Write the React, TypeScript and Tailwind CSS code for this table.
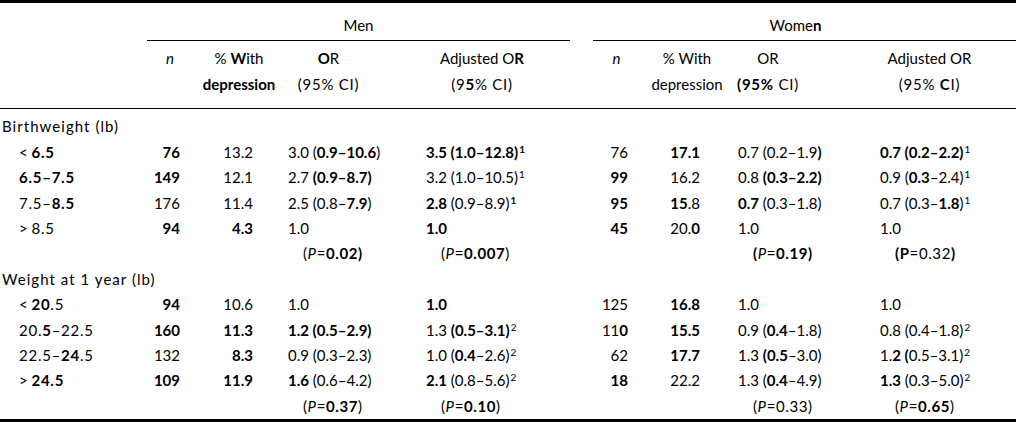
import type { ReactNode } from 'react';

const B = ({ children }: { children: ReactNode }) => <span className="font-bold">{children}</span>;
const P = () => <span className="italic">P</span>;
const Sup = ({ children }: { children: ReactNode }) => <sup className="text-[10px] ml-[1px]">{children}</sup>;
const Lt = () => <span className="mr-[3px]">&lt;</span>;
const Gt = () => <span className="mr-[3px]">&gt;</span>;
// p-value cells sit a little in from the column edge
const Pv = ({ children }: { children: ReactNode }) => <span className="ml-[15px] tracking-[0.04em]">{children}</span>;

const cols = 'grid grid-cols-[147px_43px_75px_145px_160px_23px_47px_72px_153px_151px]';

type Row = {
  label: ReactNode;
  section?: boolean;
  cells?: ReactNode[];
};

const rows: Row[] = [
  { label: 'Birthweight (lb)', section: true },
  {
    label: <><Lt /><B>6.5</B></>,
    cells: [
      <B>76</B>, '13.2', <>3.0 (<B>0.9–10.6</B>)</>, <B>3.5 (1.0–12.8)<Sup>1</Sup></B>,
      '76', <B>17.1</B>, <>0.7 (0.2–1.9<B>)</B></>, <><B>0.7 (0.2–2.2)</B><Sup>1</Sup></>,
    ],
  },
  {
    label: <B>6.5–7.5</B>,
    cells: [
      <B>149</B>, '12.1', <>2.7 <B>(0.9–8.7)</B></>, <>3.2 (1.0–10.5)<Sup>1</Sup></>,
      <B>99</B>, '16.2', <>0.8 <B>(0.3–2.2)</B></>, <>0.9 (<B>0.3</B>–2.4)<Sup>1</Sup></>,
    ],
  },
  {
    label: <>7.5–<B>8.5</B></>,
    cells: [
      '176', '11.4', <>2.5 (0.8–<B>7.9</B>)</>, <><B>2.8</B> (0.9–8.9)<B><Sup>1</Sup></B></>,
      <B>95</B>, <><B>15</B>.8</>, <><B>0.7</B> (0.3–1.8)</>, <>0.7 (0.3–<B>1.8</B>)<Sup>1</Sup></>,
    ],
  },
  {
    label: <><Gt />8.5</>,
    cells: [
      <B>94</B>, <B>4.3</B>, '1.0', <B>1.0</B>,
      <B>45</B>, <>20.<B>0</B></>, '1.0', '1.0',
    ],
  },
  {
    label: '',
    cells: [
      '', '', <Pv>(<P />=<B>0.02)</B></Pv>, <Pv>(<P />=<B>0.007</B>)</Pv>,
      '', '', <Pv><B>(</B><P />=<B>0.19)</B></Pv>, <Pv><B>(P</B>=0.32<B>)</B></Pv>,
    ],
  },
  { label: 'Weight at 1 year (lb)', section: true },
  {
    label: <><Lt /><B>20</B>.5</>,
    cells: [
      <B>94</B>, '10.6', '1.0', <B>1.0</B>,
      '125', <B>16.8</B>, '1.0', '1.0',
    ],
  },
  {
    label: <>20.<B>5</B>–22.5</>,
    cells: [
      <B>160</B>, <B>11.3</B>, <B>1.2 (0.5–2.9)</B>, <>1.3 <B>(0.5–3.1)</B><Sup>2</Sup></>,
      <>11<B>0</B></>, <B>15.5</B>, <>0.9 (<B>0.4</B>–1.8)</>, <>0.8 (0.4–1.8)<Sup>2</Sup></>,
    ],
  },
  {
    label: <>22.5–<B>24</B>.5</>,
    cells: [
      '132', <B>8.3</B>, '0.9 (0.3–2.3)', <>1.0 (<B>0.4</B>–2.6)<Sup>2</Sup></>,
      '62', <B>17.7</B>, <>1.3 <B>(0.5</B>–3.0)</>, <>1.<B>2 (</B>0.5–3.1)<Sup>2</Sup></>,
    ],
  },
  {
    label: <><Gt /><B>24.5</B></>,
    cells: [
      <B>109</B>, <B>11.9</B>, <><B>1.6</B> (0.6–4.2)</>, <><B>2.1</B> (0.8–5.6)<Sup>2</Sup></>,
      <B>18</B>, '22.2', <>1.3 (<B>0.4</B>–4.9)</>, <><B>1.3</B> (0.3–5.0)<Sup>2</Sup></>,
    ],
  },
  {
    label: '',
    cells: [
      '', '', <Pv>(<P />=<B>0.37</B>)</Pv>, <Pv>(<P />=<B>0.10</B>)</Pv>,
      '', '', <Pv>(<P />=0.33)</Pv>, <Pv>(<P />=<B>0.65</B>)</Pv>,
    ],
  },
];

// cell alignment per data column (the gap column is skipped)
const cellCls = [
  'text-right pr-[10px]',
  'text-right pr-[12px]',
  'pl-[23px] whitespace-nowrap',
  'pl-[16px] whitespace-nowrap',
  'text-right pr-[12px]',
  'text-right pr-[12px]',
  'pl-[26px] whitespace-nowrap',
  'pl-[15px] whitespace-nowrap',
];

function BodyRow({ row }: { row: Row }) {
  if (row.section) {
    return (
      <div className="h-[25.4px] flex items-center pl-[2px] tracking-[0.07em] whitespace-nowrap">{row.label}</div>
    );
  }
  const c = row.cells ?? [];
  return (
    <div className={`${cols} h-[25.4px] items-center`}>
      <div className="pl-[19px] tracking-[0.05em] whitespace-nowrap">{row.label}</div>
      <div className={cellCls[0]}>{c[0]}</div>
      <div className={cellCls[1]}>{c[1]}</div>
      <div className={cellCls[2]}>{c[2]}</div>
      <div className={cellCls[3]}>{c[3]}</div>
      <div />
      <div className={cellCls[4]}>{c[4]}</div>
      <div className={cellCls[5]}>{c[5]}</div>
      <div className={cellCls[6]}>{c[6]}</div>
      <div className={cellCls[7]}>{c[7]}</div>
    </div>
  );
}

const head = 'flex flex-col items-center whitespace-nowrap';

export default function App() {
  return (
    <div className="w-[1016px] h-[422px] bg-white text-black text-[15px] font-['Lato','Open_Sans',sans-serif] overflow-hidden">
      <div className="h-[3px] bg-black" />

      {/* group headings */}
      <div className={`${cols} h-[37px] items-center pt-[8px]`}>
        <div />
        <div className="col-span-4 text-center">Men</div>
        <div />
        <div className="col-span-4 text-center pr-[18px]">
          Wome<B>n</B>
        </div>
      </div>
      <div className={cols}>
        <div />
        <div className="col-span-4 h-px bg-black" />
        <div />
        <div className="col-span-4 h-px bg-black" />
      </div>

      {/* column headings */}
      <div className={`${cols} pt-[4px] pb-[11px] leading-[26px]`}>
        <div />
        <div className={`${head} pl-[3px] italic`}>n</div>
        <div className={`${head} pl-[23px]`}>
          <div>% <B>W</B>ith</div>
          <div className="font-bold">depression</div>
        </div>
        <div className={`${head} pr-[20px] pl-[2px]`}>
          <div><B>O</B>R</div>
          <div className="tracking-[0.05em]">(95% CI)</div>
        </div>
        <div className={`${head} pr-[16px]`}>
          <div>Adjusted O<B>R</B></div>
          <div className="tracking-[0.05em]">(9<B>5</B>% CI)</div>
        </div>
        <div />
        <div className={`${head} italic`}>n</div>
        <div className={`${head} pl-[22px]`}>
          <div>% With</div>
          <div>depression</div>
        </div>
        <div className={`${head} pr-[41px]`}>
          <div>OR</div>
          <div className="tracking-[0.05em]"><B>(95%</B> CI)</div>
        </div>
        <div className={`${head} pr-[22px]`}>
          <div>Adjusted OR</div>
          <div className="tracking-[0.05em]">(95% <B>C</B>I)</div>
        </div>
      </div>
      <div className="h-px bg-black" />

      <div className="pt-[5px]">
        {rows.map((r, i) => (
          <BodyRow key={i} row={r} />
        ))}
      </div>
      <div className="h-[3px] bg-black" />
    </div>
  );
}
